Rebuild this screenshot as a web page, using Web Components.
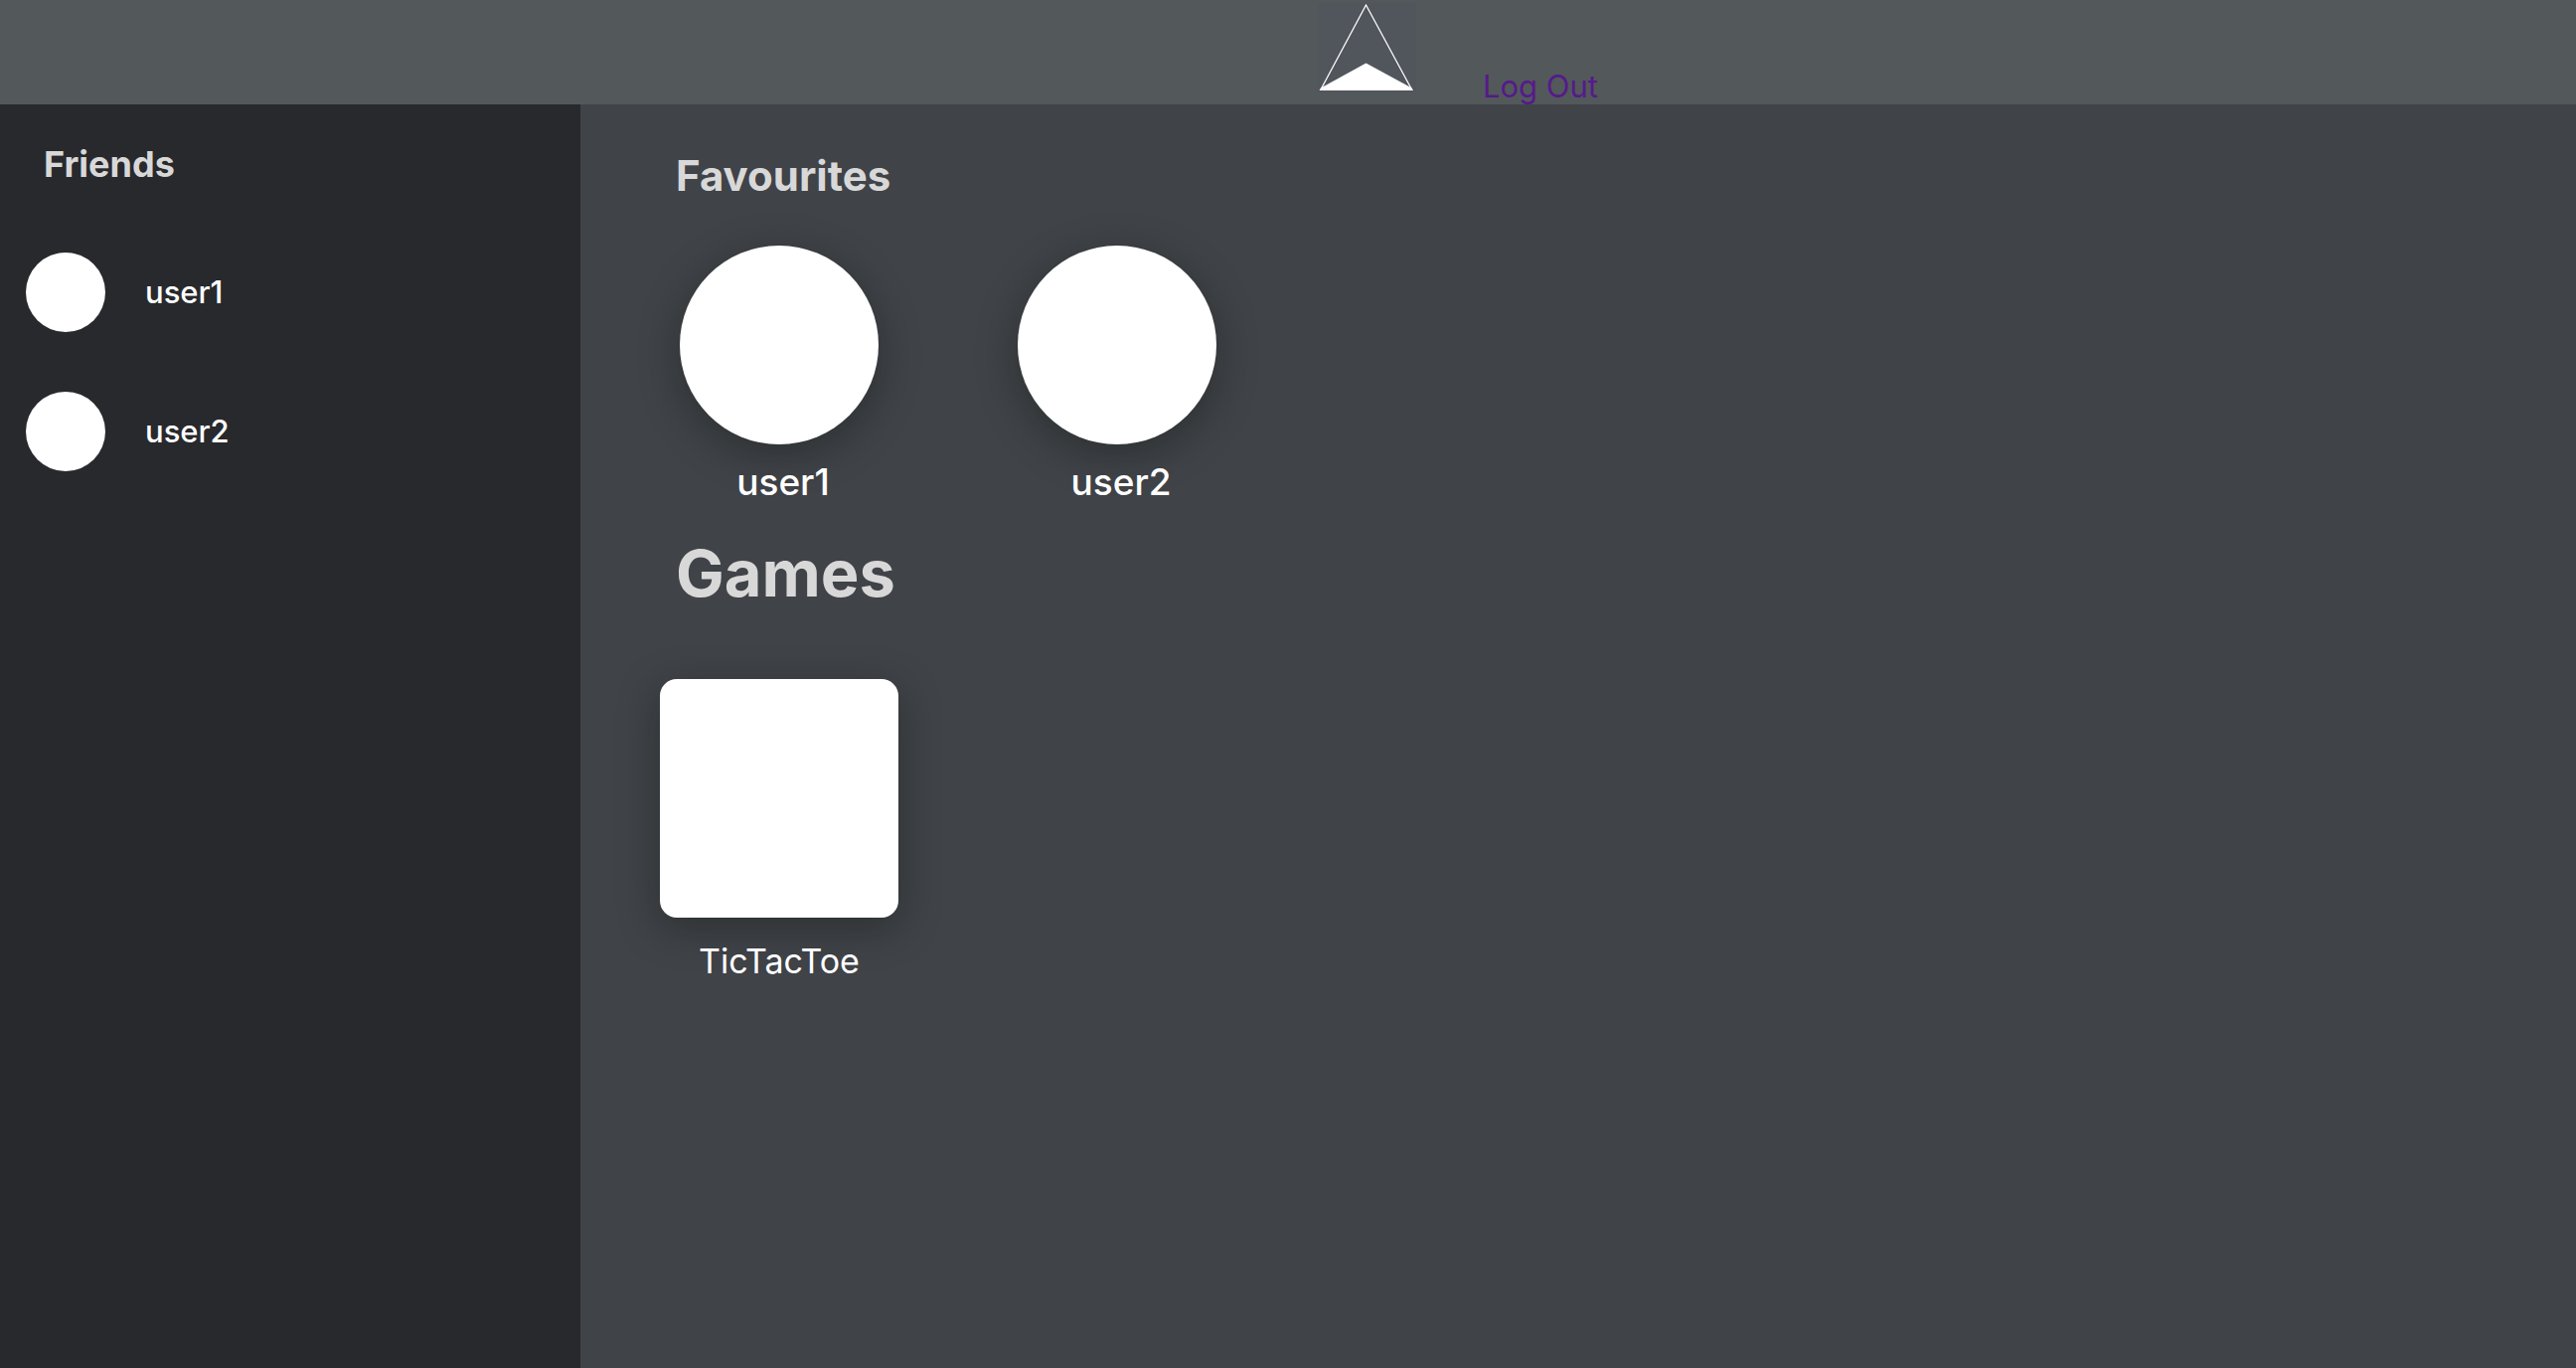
<!DOCTYPE html>
<html lang="en">
<head>
<meta charset="utf-8">
<title>Games</title>
<style>
  html, body { margin: 0; min-height: 100%; background: #404348; }
  body { font-family: Inter, "Open Sans", sans-serif; color: #fff; }
</style>
</head>
<body>
<game-app></game-app>
<script>
const define = (name, html) => {
  const template = document.createElement('template');
  template.innerHTML = html;
  customElements.define(name, class extends HTMLElement {
    constructor() {
      super();
      this.attachShadow({ mode: 'open' }).append(template.content.cloneNode(true));
    }
  });
};

define('app-logo', `
  <style>
    :host { display: block; }
    svg { display: block; width: 99px; height: 96px; }
  </style>
  <svg viewBox="0 0 99 96" role="img" aria-label="Logo">
    <rect y="3" width="99" height="90" fill="#51565c"/>
    <path d="M48.500 5 L3 90 H94.500 Z" fill="none" stroke="#fff" stroke-width="1.300"/>
    <path d="M48.500 63.500 L94.500 88.500 L96 91 H1.500 L3 88.500 Z" fill="#fff"/>
  </svg>`);

define('app-header', `
  <style>
    :host { display: flex; justify-content: center; gap: 67px; height: 105px; padding-left: 342px; background: #53585b; box-sizing: border-box; }
    a { align-self: flex-end; font-size: 31px; line-height: 36px; color: #551a8b; text-decoration: none; }
  </style>
  <app-logo></app-logo>
  <a href="#logout">Log Out</a>`);

define('friend-item', `
  <style>
    :host { display: flex; align-items: center; gap: 40px; font-size: 31px; line-height: 40px; font-weight: 500; }
    .avatar { width: 80px; height: 80px; border-radius: 50%; background: #fff; }
  </style>
  <div class="avatar"></div><span><slot></slot></span>`);

define('friends-panel', `
  <style>
    :host { display: block; flex: 0 0 584px; box-sizing: border-box; padding: 36px 26px; background: #28292d; }
    h2 { margin: 0 0 65px; padding-left: 18px; font-size: 36px; line-height: 48px; font-weight: 700; color: #d8d8d8; }
    .list { display: flex; flex-direction: column; gap: 60px; }
  </style>
  <h2>Friends</h2>
  <div class="list"><slot></slot></div>`);

define('favourite-item', `
  <style>
    :host { display: flex; flex-direction: column; align-items: center; gap: 14px; width: 200px; font-size: 37px; line-height: 48px; font-weight: 500; }
    .avatar { width: 200px; height: 200px; border-radius: 50%; background: #fff; box-shadow: 0 10px 40px rgba(8,16,8,.36); }
    span { padding-left: 8px; }
  </style>
  <div class="avatar"></div><span><slot></slot></span>`);

define('game-card', `
  <style>
    :host { display: flex; flex-direction: column; align-items: center; gap: 20px; width: 240px; font-size: 34px; line-height: 48px; }
    .cover { width: 240px; height: 240px; border-radius: 17px; background: #fff; box-shadow: 0 10px 40px rgba(8,16,8,.36); }
  </style>
  <div class="cover"></div><span><slot></slot></span>`);

define('game-app', `
  <style>
    :host { display: flex; flex-direction: column; min-height: 100vh; }
    .body { display: flex; flex: 1; }
    main { flex: 1; padding: 48px 80px; }
    h1, h2 { margin: 0; padding-left: 16px; color: #d8d8d8; font-weight: 700; }
    h2 { font-size: 42px; line-height: 48px; }
    h1 { font-size: 65px; line-height: 80px; }
    .favourites { display: flex; gap: 140px; padding: 46px 20px 28px; }
    .games { display: flex; gap: 100px; padding-top: 66px; }
  </style>
  <app-header></app-header>
  <div class="body">
    <friends-panel>
      <friend-item>user1</friend-item>
      <friend-item>user2</friend-item>
    </friends-panel>
    <main>
      <h2>Favourites</h2>
      <div class="favourites">
        <favourite-item>user1</favourite-item>
        <favourite-item>user2</favourite-item>
      </div>
      <h1>Games</h1>
      <div class="games"><game-card>TicTacToe</game-card></div>
    </main>
  </div>`);
</script>
</body>
</html>
